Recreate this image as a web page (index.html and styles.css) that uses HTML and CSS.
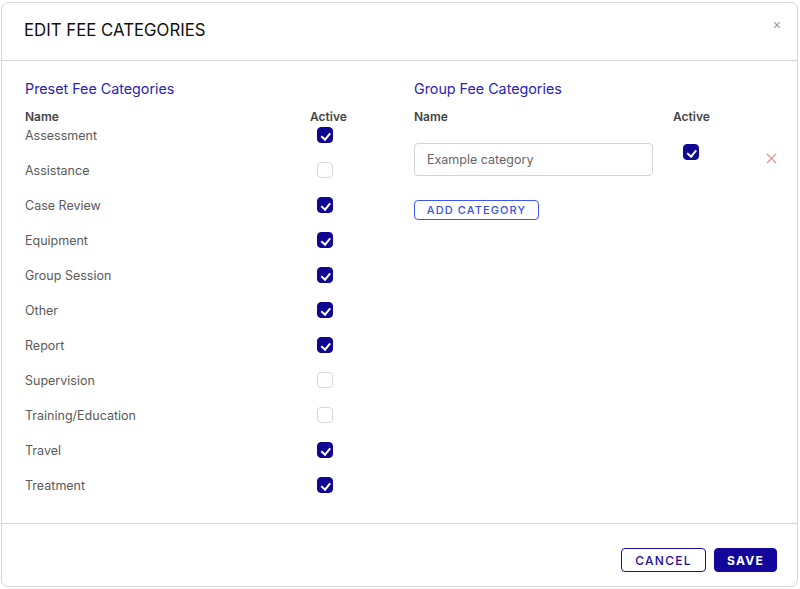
FILE: index.html
```html
<!DOCTYPE html>
<html lang="en">
<head>
    <meta charset="UTF-8">
    <meta name="viewport" content="width=device-width, initial-scale=1.0">
    <title>Edit Fee Categories</title>
    <link rel="stylesheet" href="styles.css">
</head>
<body>

    <div class="modal">
        <div class="modal-header">
            <h2>EDIT FEE CATEGORIES</h2>
            <button class="close-btn">&times;</button>
        </div>

        <div class="modal-body">
            <div class="preset">
                <h3>Preset Fee Categories</h3>
                <div class="col-heads">
                    <span>Name</span>
                    <span class="active-head">Active</span>
                </div>
                <div class="rows">
                    <div class="row"><span>Assessment</span><span class="check on"></span></div>
                    <div class="row"><span>Assistance</span><span class="check"></span></div>
                    <div class="row"><span>Case Review</span><span class="check on"></span></div>
                    <div class="row"><span>Equipment</span><span class="check on"></span></div>
                    <div class="row"><span>Group Session</span><span class="check on"></span></div>
                    <div class="row"><span>Other</span><span class="check on"></span></div>
                    <div class="row"><span>Report</span><span class="check on"></span></div>
                    <div class="row"><span>Supervision</span><span class="check"></span></div>
                    <div class="row"><span>Training/Education</span><span class="check"></span></div>
                    <div class="row"><span>Travel</span><span class="check on"></span></div>
                    <div class="row"><span>Treatment</span><span class="check on"></span></div>
                </div>
            </div>

            <div class="group">
                <h3>Group Fee Categories</h3>
                <div class="group-heads">
                    <span>Name</span>
                    <span>Active</span>
                </div>
                <div class="group-row">
                    <input type="text" class="cat-input" placeholder="Example category">
                    <span class="check on"></span>
                    <button class="remove-btn">
                        <svg width="11" height="11" viewBox="0 0 11 11"><path d="M1 1 L10 10 M10 1 L1 10" stroke="#f08a8a" stroke-width="1.2" fill="none"/></svg>
                    </button>
                </div>
                <button class="add-btn">ADD CATEGORY</button>
            </div>
        </div>

        <div class="modal-footer">
            <button class="cancel-btn">CANCEL</button>
            <button class="save-btn">SAVE</button>
        </div>
    </div>

</body>
</html>
```

FILE: styles.css
```css
body {
    margin: 0;
    font-family: Inter, "Noto Sans", sans-serif;
    background-color: #fff;
}
.modal {
    margin: 2px 2px 0 1px;
    height: 585px;
    border: 1px solid #d6d6d6;
    border-radius: 7px;
    display: flex;
    flex-direction: column;
    box-sizing: border-box;
}
.modal-header {
    height: 58px;
    border-bottom: 1px solid #d6d6d6;
    display: flex;
    align-items: center;
    justify-content: space-between;
    padding: 0 16px 0 22px;
    box-sizing: border-box;
}
.modal-header h2 {
    margin: 0 0 3px 0;
    font-size: 16.8px;
    font-weight: 400;
    color: #111;
}
.close-btn {
    border: none;
    background: none;
    color: #999;
    font-size: 14px;
    padding: 0;
    margin-bottom: 14px;
    cursor: pointer;
}
.modal-body {
    flex: 1;
    display: grid;
    grid-template-columns: 365px 1fr;
    gap: 24px;
    padding: 18px 24px 0 23px;
}
h3 {
    margin: 0;
    font-size: 14.3px;
    font-weight: 400;
    color: #2b25b0;
    line-height: 20px;
}
.col-heads, .group-heads {
    display: flex;
    margin-top: 9px;
    font-size: 12px;
    font-weight: 600;
    color: #444;
    line-height: 18px;
}
.col-heads span:first-child {
    width: 285px;
}
.rows {
    display: flex;
    flex-direction: column;
    gap: 19px;
    margin-top: 1px;
}
.row {
    display: flex;
    align-items: center;
    height: 16px;
    font-size: 12.5px;
    color: #5a5a5a;
}
.row span:first-child {
    width: 292px;
}
.check {
    width: 16px;
    height: 16px;
    border: 1px solid #d3d8e0;
    border-radius: 4px;
    box-sizing: border-box;
    display: inline-block;
    position: relative;
}
.check.on {
    background-color: #0f0791;
    border-color: #0f0791;
}
.check.on::after {
    content: "";
    position: absolute;
    left: 4.5px;
    top: 2.5px;
    width: 3.5px;
    height: 6.5px;
    border: solid #fff;
    border-width: 0 2.2px 2.2px 0;
    transform: rotate(40deg);
}
.group-heads span:first-child {
    width: 259px;
}
.group-row {
    display: flex;
    align-items: flex-start;
    margin-top: 17px;
}
.cat-input {
    width: 239px;
    height: 33px;
    border: 1px solid #cfd3da;
    border-radius: 4px;
    padding: 0 12px;
    font-family: Inter, "Noto Sans", sans-serif;
    font-size: 12.5px;
    box-sizing: border-box;
}
.cat-input::placeholder {
    color: #666;
}
.group-row .check {
    margin: 1px 0 0 30px;
}
.remove-btn {
    border: none;
    background: none;
    padding: 0;
    margin: 10px 0 0 67px;
    line-height: 0;
    cursor: pointer;
}
.add-btn {
    display: block;
    margin-top: 24px;
    width: 125px;
    height: 20px;
    border: 1px solid #3a58f0;
    border-radius: 4px;
    background: #fff;
    color: #3a50d8;
    font-family: Inter, "Noto Sans", sans-serif;
    font-size: 11px;
    font-weight: 500;
    letter-spacing: 1.1px;
    padding: 0;
    cursor: pointer;
}
.modal-footer {
    height: 63px;
    border-top: 1px solid #d6d6d6;
    display: flex;
    justify-content: flex-end;
    align-items: flex-start;
    gap: 8px;
    padding: 24px 20px 0 0;
    box-sizing: border-box;
}
.cancel-btn, .save-btn {
    height: 24px;
    border-radius: 4px;
    font-family: Inter, "Noto Sans", sans-serif;
    font-size: 12px;
    letter-spacing: 1.3px;
    cursor: pointer;
    padding: 0;
}
.cancel-btn {
    width: 85px;
    background: #fff;
    border: 1px solid #1a0f9a;
    color: #1a0f9a;
    font-weight: 500;
}
.save-btn {
    width: 63px;
    background: #12079a;
    border: 1px solid #12079a;
    color: #fff;
    font-weight: 700;
}
```
